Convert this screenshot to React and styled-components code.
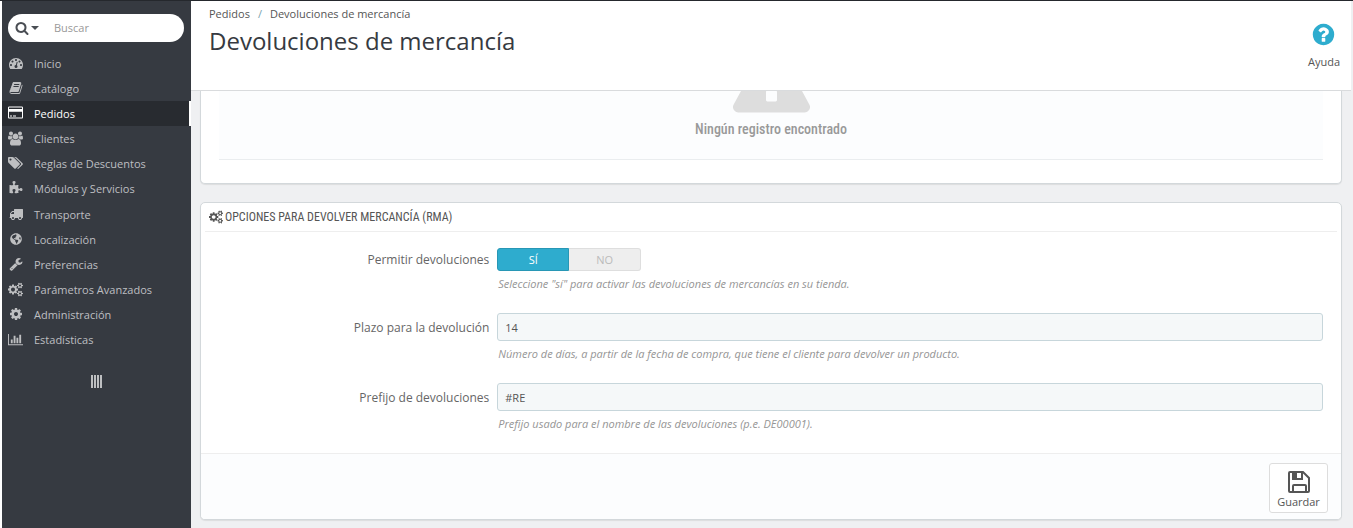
import React from "react";
import styled, { createGlobalStyle } from "styled-components";
import { FaGlobeAmericas } from "react-icons/fa";

const GlobalStyle = createGlobalStyle`
  *, *::before, *::after { box-sizing: border-box; }
  body {
    margin: 0;
    background: #eff0f2;
    color: #555;
    font-family: "Open Sans", "Noto Sans", sans-serif;
    font-size: 12px;
    line-height: 16px;
  }
  button, input { font: inherit; color: inherit; }
`;

const condensed = `"Ubuntu Condensed", "Roboto Condensed", Roboto, sans-serif`;

const Page = styled.div`
  display: flex;
  min-height: 100vh;
  border-top: 1px solid #25282d;
`;

const Sidebar = styled.aside`
  flex: 0 0 191px;
  min-width: 0;
  border-left: 2px solid #fff;
  background: #363a41;
`;

const SearchBox = styled.form`
  display: flex;
  align-items: center;
  height: 28px;
  margin: 13px 7px 9px 6px;
  border-radius: 14px;
  background: #fff;
  overflow: hidden;
`;

const SearchScope = styled.button`
  display: flex;
  align-items: center;
  gap: 2px;
  height: 28px;
  padding: 0 0 0 7px;
  border: 0;
  background: none;
  color: #4a4e54;
`;

const SearchInput = styled.input`
  flex: 1;
  min-width: 0;
  margin-left: 15px;
  padding: 0;
  border: 0;
  outline: 0;
  background: none;
  font-size: 11px;
  &::placeholder { color: #999; opacity: 1; }
`;

const Menu = styled.ul`
  display: grid;
  grid-auto-rows: 1fr;
  height: 302px;
  margin: 0;
  padding: 0;
  list-style: none;
`;

const MenuLink = styled.a`
  display: flex;
  align-items: center;
  gap: 11px;
  height: 100%;
  padding-left: 6px;
  border-right: 2px solid ${(p) => (p.$active ? "#fff" : "transparent")};
  background: ${(p) => (p.$active ? "#282b30" : "transparent")};
  background-clip: padding-box;
  color: ${(p) => (p.$active ? "#fff" : "#bebfc1")};
  font-size: 11px;
  text-decoration: none;
  white-space: nowrap;
  svg { flex: none; }
`;

const MenuIcon = styled.span`
  display: flex;
  justify-content: center;
  width: 15px;
  padding-bottom: 2px;
`;

const CollapseButton = styled.button`
  display: flex;
  gap: 1px;
  margin: 22px auto 0;
  padding: 0;
  border: 0;
  background: none;
`;

const CollapseBar = styled.span`
  width: 2px;
  height: 13px;
  background: #bebfc1;
`;

const Main = styled.main`
  flex: 1;
  min-width: 0;
`;

const Header = styled.header`
  display: flex;
  justify-content: space-between;
  height: 90px;
  margin-right: 2px;
  padding: 5px 11px 0 18px;
  border-bottom: 1px solid #d9dbdd;
  background: #fff;
`;

const Breadcrumb = styled.nav`
  display: flex;
  gap: 8px;
  font-size: 11px;
  a { color: #555; text-decoration: none; }
  span { color: #7aa3b0; }
`;

const Title = styled.h1`
  margin: 3px 0 0;
  color: #363a41;
  font-size: 24px;
  font-weight: 400;
  line-height: 32px;
`;

const HelpLink = styled.a`
  display: flex;
  flex-direction: column;
  align-items: center;
  gap: 7px;
  padding-top: 16px;
  color: #555;
  font-size: 11px;
  text-decoration: none;
  svg { color: #2eacce; }
`;

const Panel = styled.section`
  margin: 0 11px 20px 9px;
  border: 1px solid #d3d8db;
  border-radius: 5px;
  background: #fff;
  box-shadow: 0 1px 1px rgba(0, 0, 0, 0.08);
  overflow: hidden;
`;

const ListPanel = styled(Panel)`
  padding: 0 18px 23px;
  border-top: 0;
  border-radius: 0 0 5px 5px;
  margin-bottom: 18px;
`;

const EmptyState = styled.div`
  display: flex;
  flex-direction: column;
  justify-content: flex-end;
  align-items: center;
  gap: 2px;
  height: 69px;
  padding-bottom: 21px;
  border-bottom: 1px solid #eaedef;
  background: #fcfdfe;
  overflow: hidden;
  color: #999;
  font: 500 14px/18px ${condensed};
  svg { flex: none; color: #ddd; }
`;

const PanelHeading = styled.h2`
  display: flex;
  align-items: center;
  gap: 2px;
  height: 29px;
  margin: 0 4px 16px;
  padding-left: 4px;
  border-bottom: 1px solid #eee;
  color: #555;
  font: 400 12px/18px ${condensed};
  text-transform: uppercase;
`;

const FormRow = styled.div`
  display: grid;
  grid-template-columns: 1fr 3fr;
  column-gap: 8px;
  margin-bottom: 21px;
  padding: 0 18px 0 13px;
`;

const RowLabel = styled.label`
  padding-top: ${(p) => (p.$compact ? "4px" : "7px")};
  color: #666;
  text-align: right;
`;

const Switch = styled.div`
  display: flex;
  width: 144px;
  height: 23px;
`;

const SwitchOption = styled.label`
  position: relative;
  display: flex;
  flex: 0 0 50%;
  align-items: center;
  justify-content: center;
  border: 1px solid #dedede;
  border-left-width: 0;
  border-radius: 0 3px 3px 0;
  background: #eee;
  color: #bbb;
  font-size: 11px;
  &:has(input:checked) {
    border: 1px solid #2897b5;
    border-radius: 3px 0 0 3px;
    background: #2eacce;
    color: #fff;
  }
  input {
    position: absolute;
    inset: 0;
    margin: 0;
    opacity: 0;
  }
`;

const TextField = styled.input`
  display: block;
  width: 100%;
  height: 28px;
  padding: 0 7px;
  border: 1px solid #c7d6db;
  border-radius: 3px;
  background: #f5f8f9;
  font-size: 11px;
`;

const Hint = styled.p`
  margin: 5px 0 0 1px;
  color: #959595;
  font-size: 11px;
  font-style: italic;
`;

const PanelFooter = styled.footer`
  display: flex;
  justify-content: flex-end;
  padding: 9px 13px 6px;
  border-top: 1px solid #eee;
  background: #fcfdfe;
`;

const SaveButton = styled.button`
  display: flex;
  flex-direction: column;
  align-items: center;
  width: 59px;
  height: 50px;
  padding: 6px 0 0;
  border: 1px solid #ddd;
  border-radius: 3px;
  background: #fff;
  font-size: 11px;
`;

const Glyph = ({ size, box = "0 0 1792 1792", d }) => (
  <svg width={size} height={size} viewBox={box} fill="currentColor" aria-hidden="true">
    <path d={d} />
  </svg>
);

const SaveIcon = () => (
  <svg width="24" height="24" viewBox="0 0 24 24" fill="none" stroke="currentColor" strokeWidth="2" aria-hidden="true">
    <path d="M3 2h13l6 6v13a1 1 0 0 1-1 1H3a1 1 0 0 1-1-1V3a1 1 0 0 1 1-1z" />
    <path d="M6 22v-6a1 1 0 0 1 1-1h11a1 1 0 0 1 1 1v6M6 2v7h9V2" />
    <path d="M7 3h3v5H7z" fill="currentColor" stroke="none" />
  </svg>
);

const glyphs = {
  search:
    "M1216 832q0-185-131.500-316.500t-316.500-131.500-316.500 131.500-131.500 316.500 131.500 316.500 316.500 131.500 316.500-131.500 131.500-316.500zm512 832q0 52-38 90t-90 38q-54 0-90-38l-343-342q-179 124-399 124-143 0-273.500-55.500t-225-150-150-225-55.500-273.500 55.500-273.500 150-225 225-150 273.500-55.500 273.500 55.500 225 150 150 225 55.500 273.500q0 220-124 399l343 343q37 37 37 90z",
  caret: "M0 0h8l-4 4z",
  dashboard:
    "M384 1152q0-53-37.500-90.500t-90.500-37.500-90.500 37.500-37.500 90.500 37.500 90.500 90.500 37.500 90.500-37.500 37.500-90.500zm192-448q0-53-37.500-90.500t-90.500-37.500-90.500 37.500-37.500 90.500 37.500 90.500 90.500 37.500 90.500-37.500 37.500-90.500zm428 481l101-382q6-26-7.500-48.500t-38.500-29.500-48 6.500-30 39.500l-101 382q-60 5-107 43.500t-63 98.500q-20 77 20 146t117 89 146-20 89-117q16-60-6-117t-72-91zm660-33q0-53-37.500-90.500t-90.500-37.500-90.500 37.500-37.500 90.500 37.500 90.500 90.500 37.500 90.500-37.500 37.500-90.500zm-640-640q0-53-37.500-90.500t-90.500-37.500-90.500 37.500-37.500 90.500 37.500 90.500 90.500 37.500 90.500-37.500 37.500-90.500zm448 192q0-53-37.500-90.500t-90.500-37.500-90.500 37.500-37.500 90.500 37.500 90.500 90.500 37.500 90.500-37.500 37.500-90.500zm320 448q0 261-141 483-19 29-54 29h-1402q-35 0-54-29-141-221-141-483 0-182 71-348t191-286 286-191 348-71 348 71 286 191 191 286 71 348z",
  book: "M1703 478q40 57 18 129l-275 906q-19 64-76.500 107.500t-122.500 43.500h-923q-77 0-148.500-53.500t-99.500-131.500q-24-67-2-127 0-4 3-27t4-37q1-8-3-21.500t-3-19.500q2-11 8-21t16.500-23.500 16.500-23.500q23-38 45-91.500t30-91.500q3-10 .5-30t-.5-28q3-11 17-28t17-23q21-36 42-92t25-90q1-9-2.500-32t.5-28q4-13 22-30.500t22-22.500q19-26 42.500-84.500t27.500-96.500q1-8-3-25.500t-2-26.500q2-8 9-18t18-23 17-21q8-12 16.500-30.500t15-35 16-36 19.500-32 26.500-23.500 36-11.500 47.500 5.500l-1 3q38-9 51-9h761q74 0 114 56t18 130l-274 906q-36 119-71.500 153.500t-128.500 34.500h-869q-27 0-38 15-11 16-1 43 24 70 144 70h923q29 0 56-15.500t35-41.500l300-987q7-22 5-57 38 15 59 43zm-1064 2q-4 13 2 22.500t20 9.500h608q13 0 25.500-9.500t16.500-22.500l21-64q4-13-2-22.500t-20-9.500h-608q-13 0-25.500 9.500t-16.500 22.500zm-83 256q-4 13 2 22.500t20 9.500h608q13 0 25.500-9.500t16.500-22.500l21-64q4-13-2-22.500t-20-9.500h-608q-13 0-25.500 9.500t-16.500 22.500z",
  card: "M160 192h1600q66 0 113 47t47 113v1216q0 66-47 113t-113 47h-1600q-66 0-113-47t-47-113v-1216q0-66 47-113t113-47zm0 128q-32 0-32 32v160h1664v-160q0-32-32-32zm-32 544v704q0 32 32 32h1600q32 0 32-32v-704zm128 480h256v128h-256zm384 0h384v128h-384z",
  users:
    "M593 896q-162 5-265 128h-134q-82 0-138-40.500t-56-118.500q0-353 124-353 6 0 43.500 21t97.500 42.500 119 21.500q67 0 133-23-5 37-5 66 0 139 81 256zm1071 637q0 120-73 189.500t-194 69.500h-874q-121 0-194-69.500t-73-189.500q0-53 3.500-103.500t14-109 26.500-108.500 43-97.500 62-81 85.500-53.500 111.500-20q10 0 43 21.500t73 48 107 48 135 21.500 135-21.500 107-48 73-48 43-21.500q61 0 111.500 20t85.500 53.500 62 81 43 97.500 26.500 108.500 14 109 3.500 103.500zm-1024-1277q0 106-75 181t-181 75-181-75-75-181 75-181 181-75 181 75 75 181zm704 384q0 159-112.500 271.500t-271.500 112.500-271.500-112.500-112.500-271.500 112.500-271.500 271.500-112.500 271.500 112.500 112.500 271.500zm576 225q0 78-56 118.500t-138 40.500h-134q-103-123-265-128 81-117 81-256 0-29-5-66 66 23 133 23 59 0 119-21.500t97.500-42.500 43.500-21q124 0 124 353zm-128-609q0 106-75 181t-181 75-181-75-75-181 75-181 181-75 181 75 75 181z",
  tags: "M448 448q0-53-37.500-90.500t-90.500-37.500-90.500 37.500-37.500 90.500 37.500 90.500 90.500 37.500 90.500-37.500 37.500-90.500zm1067 576q0 53-37 90l-491 492q-39 37-91 37-53 0-90-37l-715-716q-38-37-64.500-101t-26.500-117v-416q0-52 38-90t90-38h416q53 0 117 26.500t102 64.500l715 714q37 39 37 91zm384 0q0 53-37 90l-491 492q-39 37-91 37-36 0-59-14t-53-45l470-470q37-37 37-90 0-52-37-91l-715-714q-38-38-102-64.500t-117-26.500h224q53 0 117 26.500t102 64.500l715 714q37 39 37 91z",
  puzzle:
    "M1728 1098q0 81-44.500 135t-123.500 54q-41 0-77.500-17.500t-59-38-56.500-38-71-17.500q-110 0-110 124 0 39 16 115t15 115v5q-22 0-33 1-34 3-97.500 11.500t-115.500 13.500-98 5q-61 0-103-26.500t-42-83.500q0-37 17.500-71t38-56.500 38-59 17.500-77.500q0-79-54-123.500t-135-44.500q-84 0-143 45.500t-59 127.500q0 43 15 83t33.500 64.500 33.500 53 15 50.500q0 45-46 89-37 35-117 35-95 0-245-24-9-2-27.500-4t-27.500-4l-13-2q-1 0-3-1-2 0-2-1v-1024q2 1 17.500 3.500t34 5 21.500 3.500q150 24 245 24 80 0 117-35 46-44 46-89 0-22-15-50.500t-33.500-53-33.500-64.500-15-83q0-82 59-127.500t144-45.500q80 0 134 44.500t54 123.500q0 41-17.500 77.500t-38 59-38 56.500-17.500 71q0 57 42 83.500t103 26.500q64 0 180-15t163-17v2q-1 2-3.500 17.500t-5 34-3.500 21.500q-24 150-24 245 0 80 35 117 44 46 89 46 22 0 50.500-15t53-33.500 64.500-33.500 83-15q82 0 127.500 59t45.500 143z",
  truck:
    "M640 1408q0-52-38-90t-90-38-90 38-38 90 38 90 90 38 90-38 38-90zm-384-512h384v-256h-158q-13 0-22 9l-195 195q-9 9-9 22v30zm1280 512q0-52-38-90t-90-38-90 38-38 90 38 90 90 38 90-38 38-90zm256-1088v1024q0 15-4 26.500t-13.500 18.500-16.500 11.500-23.500 6-22.500 2-25.500 0-22.500-.5q0 106-75 181t-181 75-181-75-75-181h-384q0 106-75 181t-181 75-181-75-75-181h-64q-3 0-22.500.5t-25.500 0-22.500-2-23.500-6-16.500-11.500-13.500-18.500-4-26.500q0-26 19-45t45-19v-320q0-8-.5-35t0-38 2.500-34.500 6.500-37 14-30.500 22.500-30l198-198q19-19 50.500-32t58.500-13h160v-192q0-26 19-45t45-19h1024q26 0 45 19t19 45z",
  wrench:
    "M448 1472q0-26-19-45t-45-19-45 19-19 45 19 45 45 19 45-19 19-45zm644-420l-682 682q-37 37-90 37-52 0-91-37l-106-108q-38-36-38-90 0-53 38-91l681-681q39 98 114.500 173.500t173.500 114.500zm634-435q0 39-23 106-47 134-164.500 217.500t-258.500 83.500q-185 0-316.500-131.500t-131.500-316.500 131.500-316.500 316.500-131.500q58 0 121.500 16.500t107.500 46.500q16 11 16 28t-16 28l-293 169v224l193 107q5-3 79-48.500t135.500-81 70.500-35.500q15 0 23.500 10t8.500 25z",
  cogs: "M896 896q0-106-75-181t-181-75-181 75-75 181 75 181 181 75 181-75 75-181zm768 512q0-52-38-90t-90-38-90 38-38 90q0 53 37.500 90.500t90.500 37.500 90.500-37.500 37.500-90.500zm0-1024q0-52-38-90t-90-38-90 38-38 90q0 53 37.500 90.500t90.500 37.500 90.500-37.500 37.500-90.500zm-384 421v185q0 10-7 19.500t-16 10.500l-155 24q-11 35-32 76 34 48 90 115 7 11 7 20 0 12-7 19-23 30-82.500 89.500t-78.500 59.500q-11 0-21-7l-115-90q-37 19-77 31-11 108-23 155-7 24-30 24h-186q-11 0-20-7.500t-10-17.500l-23-153q-34-10-75-31l-118 89q-7 7-20 7-11 0-21-8-144-133-144-160 0-9 7-19 10-14 41-53t47-61q-23-44-35-82l-152-24q-10-1-17-9.500t-7-19.500v-185q0-10 7-19.500t16-10.500l155-24q11-35 32-76-34-48-90-115-7-11-7-20 0-12 7-20 22-30 82-89t79-59q11 0 21 7l115 90q34-18 77-32 11-108 23-154 7-24 30-24h186q11 0 20 7.500t10 17.500l23 153q34 10 75 31l118-89q8-7 20-7 11 0 21 8 144 133 144 160 0 8-7 19-12 16-42 54t-45 60q23 48 34 82l152 23q10 2 17 10.500t7 19.500zm640 533v140q0 16-149 31-12 27-30 52 51 113 51 138 0 4-4 7-122 71-124 71-8 0-46-47t-52-68q-20 2-30 2t-30-2q-14 21-52 68t-46 47q-2 0-124-71-4-3-4-7 0-25 51-138-18-25-30-52-149-15-149-31v-140q0-16 149-31 13-29 30-52-51-113-51-138 0-4 4-7 4-2 35-20t59-34 30-16q8 0 46 46.500t52 67.500q20-2 30-2t30 2q51-71 92-112l6-2q4 0 124 70 4 3 4 7 0 25-51 138 17 23 30 52 149 15 149 31zm0-1024v140q0 16-149 31-12 27-30 52 51 113 51 138 0 4-4 7-122 71-124 71-8 0-46-47t-52-68q-20 2-30 2t-30-2q-14 21-52 68t-46 47q-2 0-124-71-4-3-4-7 0-25 51-138-18-25-30-52-149-15-149-31v-140q0-16 149-31 13-29 30-52-51-113-51-138 0-4 4-7 4-2 35-20t59-34 30-16q8 0 46 46.500t52 67.500q20-2 30-2t30 2q51-71 92-112l6-2q4 0 124 70 4 3 4 7 0 25-51 138 17 23 30 52 149 15 149 31z",
  cog: "M1152 896q0-106-75-181t-181-75-181 75-75 181 75 181 181 75 181-75 75-181zm512-109v222q0 12-8 23t-20 13l-185 28q-19 54-39 91 35 50 107 138 10 12 10 25t-9 23q-27 37-99 108t-94 71q-12 0-26-9l-138-108q-44 23-91 38-16 136-29 186-7 28-36 28h-222q-14 0-24.500-8.500t-11.500-21.500l-28-184q-49-16-90-37l-141 107q-10 9-25 9-14 0-25-11-126-114-165-168-7-10-7-23 0-12 8-23 15-21 51-66.500t54-70.500q-27-50-41-99l-183-27q-13-2-21-12.500t-8-23.500v-222q0-12 8-23t19-13l186-28q14-46 39-92-40-57-107-138-10-12-10-24 0-10 9-23 26-36 98.500-107.500t94.500-71.500q13 0 26 10l138 107q44-23 91-38 16-136 29-186 7-28 36-28h222q14 0 24.500 8.500t11.500 21.500l28 184q49 16 90 37l142-107q9-9 24-9 13 0 25 10 129 119 165 170 7 8 7 22 0 12-8 23-15 21-51 66.500t-54 70.500q26 50 41 98l183 28q13 2 21 12.500t8 23.500z",
  chart:
    "M640 896v512h-256v-512h256zm384-512v1024h-256v-1024h256zm1024 1152v128h-2048v-1536h128v1408h1920zm-640-896v768h-256v-768h256zm384-384v1152h-256v-1152h256z",
  help: "M1024 1376v-192q0-14-9-23t-23-9h-192q-14 0-23 9t-9 23v192q0 14 9 23t23 9h192q14 0 23-9t9-23zm256-672q0-88-55.500-163t-138.500-116-170-41q-243 0-371 213-15 24 8 42l132 100q7 6 19 6 16 0 25-12 53-68 86-92 34-24 86-24 48 0 85.500 26t37.500 59q0 38-20 61t-68 45q-63 28-115.500 86.500t-52.500 125.500v36q0 14 9 23t23 9h192q14 0 23-9t9-23q0-19 21.500-49.500t54.500-49.500q32-18 49-28.500t46-35 44.500-48 28-60.500 12.500-81zm384 192q0 209-103 385.500t-279.500 279.500-385.500 103-385.500-103-279.500-279.500-103-385.500 103-385.500 279.500-279.500 385.500-103 385.500 103 279.500 279.500 103 385.500z",
  warning:
    "M1024 1375v-190q0-14-9.500-23.500t-22.500-9.500h-192q-13 0-22.500 9.500t-9.500 23.500v190q0 14 9.500 23.500t22.500 9.500h192q13 0 22.500-9.500t9.500-23.500zm-2-374l18-459q0-12-10-19-13-11-24-11h-220q-11 0-24 11-10 7-10 21l17 457q0 10 10 16.500t24 6.500h185q14 0 23.500-6.500t10.500-16.500zm-14-934l768 1408q35 63-2 126-17 29-46.500 46t-63.500 17h-1536q-34 0-63.500-17t-46.500-46q-37-63-2-126l768-1408q17-31 47-49t65-18 65 18 47 49z",
};

const wide = "0 0 1920 1792";

const menu = [
  { text: "Inicio", icon: <Glyph size={14} d={glyphs.dashboard} /> },
  { text: "Catálogo", icon: <Glyph size={14} d={glyphs.book} /> },
  { text: "Pedidos", icon: <Glyph size={15} box="0 0 1920 1920" d={glyphs.card} />, active: true },
  { text: "Clientes", icon: <Glyph size={15} box={wide} d={glyphs.users} /> },
  { text: "Reglas de Descuentos", icon: <Glyph size={15} box="0 0 1920 1920" d={glyphs.tags} /> },
  { text: "Módulos y Servicios", icon: <Glyph size={14} d={glyphs.puzzle} /> },
  { text: "Transporte", icon: <Glyph size={14} d={glyphs.truck} /> },
  { text: "Localización", icon: <FaGlobeAmericas size={12} /> },
  { text: "Preferencias", icon: <Glyph size={14} d={glyphs.wrench} /> },
  { text: "Parámetros Avanzados", icon: <Glyph size={15} box={wide} d={glyphs.cogs} /> },
  { text: "Administración", icon: <Glyph size={14} d={glyphs.cog} /> },
  { text: "Estadísticas", icon: <Glyph size={15} box="0 0 2048 1792" d={glyphs.chart} /> },
];

export default function App() {
  return (
    <>
      <GlobalStyle />
      <Page>
        <Sidebar>
          <SearchBox role="search">
            <SearchScope type="button" aria-label="Ámbito de búsqueda">
              <Glyph size={14} d={glyphs.search} />
              <Glyph size={8} box="0 -2 8 8" d={glyphs.caret} />
            </SearchScope>
            <SearchInput type="text" placeholder="Buscar" aria-label="Buscar" />
          </SearchBox>
          <nav>
            <Menu>
              {menu.map((item) => (
                <li key={item.text}>
                  <MenuLink href="#" $active={item.active}>
                    <MenuIcon>{item.icon}</MenuIcon>
                    {item.text}
                  </MenuLink>
                </li>
              ))}
            </Menu>
          </nav>
          <CollapseButton type="button" aria-label="Contraer menú">
            <CollapseBar />
            <CollapseBar />
            <CollapseBar />
            <CollapseBar />
          </CollapseButton>
        </Sidebar>
        <Main>
          <Header>
            <div>
              <Breadcrumb>
                <a href="#">Pedidos</a>
                <span>/</span>
                <a href="#">Devoluciones de mercancía</a>
              </Breadcrumb>
              <Title>Devoluciones de mercancía</Title>
            </div>
            <HelpLink href="#">
              <Glyph size={25} d={glyphs.help} />
              Ayuda
            </HelpLink>
          </Header>
          <ListPanel>
            <EmptyState>
              <Glyph size={77} d={glyphs.warning} />
              Ningún registro encontrado
            </EmptyState>
          </ListPanel>
          <Panel as="form">
            <PanelHeading>
              <Glyph size={14} box={wide} d={glyphs.cogs} />
              Opciones para devolver mercancía (RMA)
            </PanelHeading>
            <FormRow>
              <RowLabel as="span" id="allow-label" $compact>
                Permitir devoluciones
              </RowLabel>
              <div>
                <Switch role="radiogroup" aria-labelledby="allow-label">
                  <SwitchOption>
                    <input type="radio" name="allow" defaultChecked />
                    SÍ
                  </SwitchOption>
                  <SwitchOption>
                    <input type="radio" name="allow" />
                    NO
                  </SwitchOption>
                </Switch>
                <Hint>Seleccione "sí" para activar las devoluciones de mercancías en su tienda.</Hint>
              </div>
            </FormRow>
            <FormRow>
              <RowLabel htmlFor="days">Plazo para la devolución</RowLabel>
              <div>
                <TextField id="days" type="text" defaultValue="14" />
                <Hint>
                  Número de días, a partir de la fecha de compra, que tiene el cliente para devolver
                  un producto.
                </Hint>
              </div>
            </FormRow>
            <FormRow>
              <RowLabel htmlFor="prefix">Prefijo de devoluciones</RowLabel>
              <div>
                <TextField id="prefix" type="text" defaultValue="#RE" />
                <Hint>Prefijo usado para el nombre de las devoluciones (p.e. DE00001).</Hint>
              </div>
            </FormRow>
            <PanelFooter>
              <SaveButton type="button">
                <SaveIcon />
                Guardar
              </SaveButton>
            </PanelFooter>
          </Panel>
        </Main>
      </Page>
    </>
  );
}
